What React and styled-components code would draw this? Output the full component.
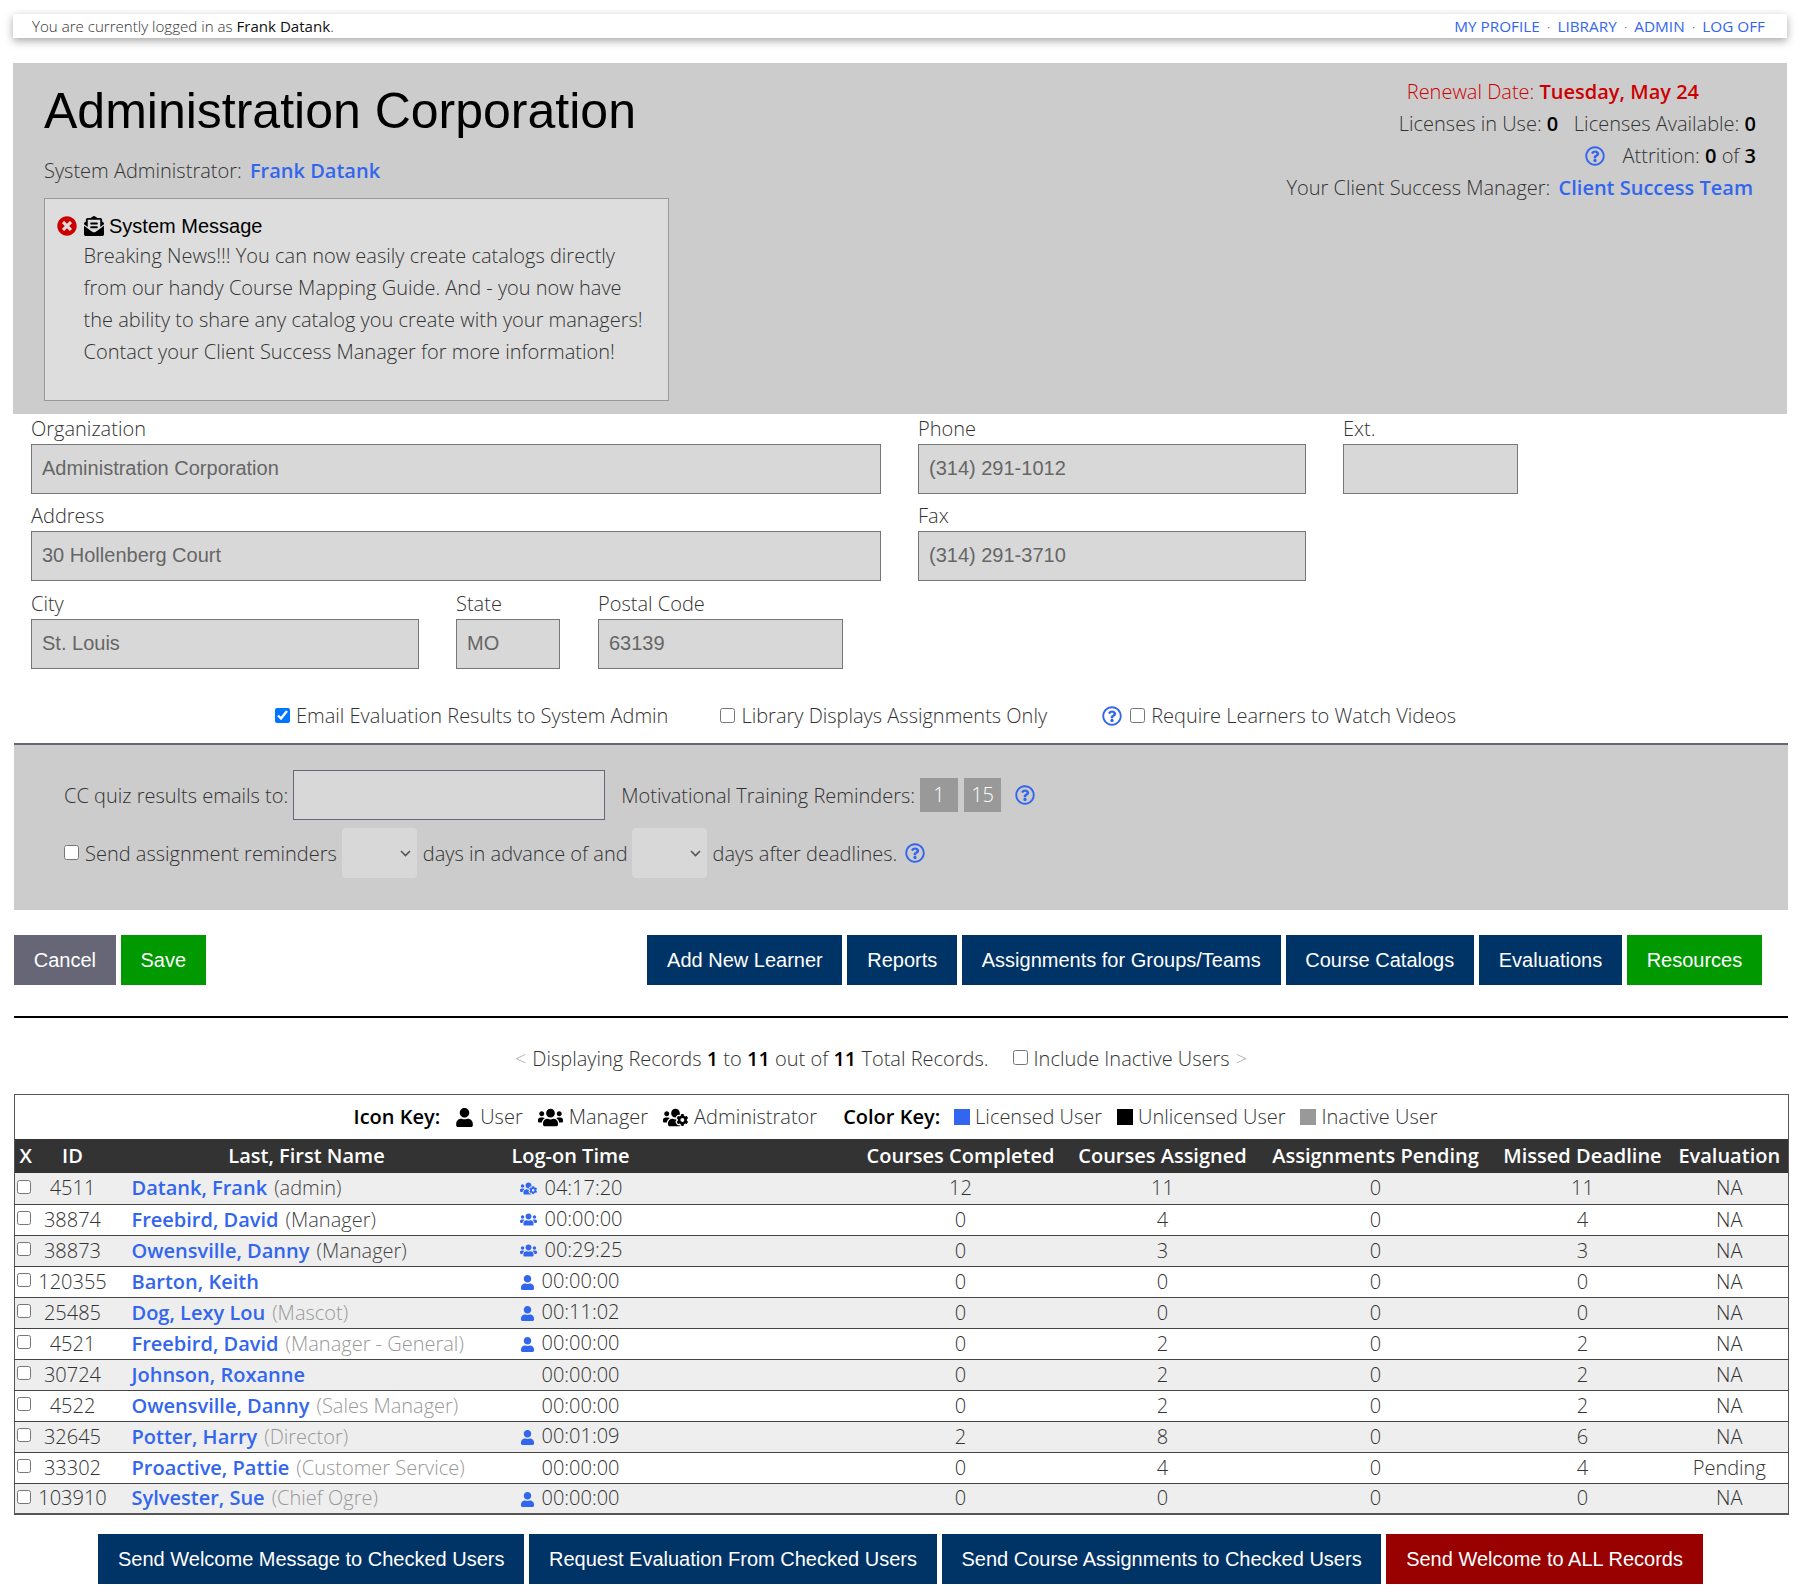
import React from "react";
import styled, { createGlobalStyle } from "styled-components";
import {
  FaEnvelopeOpenText,
  FaRegQuestionCircle,
  FaTimesCircle,
  FaUser,
  FaUsers,
  FaUsersCog,
} from "react-icons/fa";

const BLUE = "#3366ee";

const chevron =
  "data:image/svg+xml;utf8,<svg xmlns='http://www.w3.org/2000/svg' width='11' height='7' viewBox='0 0 11 7'><path d='M1 1l4.5 4.5L10 1' fill='none' stroke='%23555' stroke-width='1.6'/></svg>";

const GlobalStyle = createGlobalStyle`
  html, body {
    margin: 0;
    padding: 0;
    background: #fff;
  }
  body {
    font-family: "Open Sans", "Liberation Sans", sans-serif;
    font-weight: 300;
    font-size: 20px;
    color: #333;
  }
  * {
    box-sizing: border-box;
  }
`;

const Page = styled.div`
  width: 1805px;
  height: 1586px;
  padding: 14px 18px 0 13px;
  overflow: hidden;
`;

const TopBar = styled.div`
  height: 24px;
  margin-bottom: 25px;
  padding: 0 22px 0 19px;
  display: flex;
  justify-content: space-between;
  align-items: center;
  background: #fff;
  box-shadow: 0 3px 8px rgba(0, 0, 0, 0.35);
  font-size: 15.3px;
  line-height: 24px;
`;

const LoggedIn = styled.span`
  font-size: 15.1px;
  b {
    font-weight: 500;
    color: #111;
  }
`;

const TopLinks = styled.div`
  display: flex;
  gap: 7px;
  color: #666;
  a {
    color: ${BLUE};
    font-weight: 500;
  }
`;

const Header = styled.header`
  height: 351px;
  padding: 0 31px 0 31px;
  display: flex;
  justify-content: space-between;
  background: #ccc;
`;

const Title = styled.h1`
  margin: 18px 0 0;
  font-family: "Liberation Sans", Arial, sans-serif;
  font-weight: 400;
  font-size: 50px;
  line-height: 60px;
  color: #000;
`;

const AdminLine = styled.div`
  margin-top: 15px;
  line-height: 30px;
  a {
    margin-left: 3px;
    font-weight: 600;
    color: ${BLUE};
  }
`;

const MessageBox = styled.div`
  width: 625px;
  height: 203px;
  margin-top: 12px;
  padding: 11px 12px;
  background: #ddd;
  border: 1px solid #999;
`;

const MessageHead = styled.div`
  display: flex;
  align-items: center;
  gap: 6px;
  height: 32px;
  font-family: "Liberation Sans", Arial, sans-serif;
  font-weight: 400;
  color: #000;
`;

const ErrorIcon = styled(FaTimesCircle)`
  margin-right: 1px;
  font-size: 20px;
  color: #cc0000;
`;

const MessageIcon = styled(FaEnvelopeOpenText)`
  margin-right: -1px;
  font-size: 20px;
  color: #000;
`;

const MessageBody = styled.div`
  margin-top: -2px;
  padding-left: 26.5px;
  line-height: 32px;
  white-space: pre-line;
`;

const Stats = styled.div`
  padding-top: 13px;
  text-align: right;
  line-height: 32px;
  b {
    font-weight: 600;
    color: #000;
  }
  a {
    margin-left: 3px;
    font-weight: 600;
    color: ${BLUE};
  }
`;

const StatRow = styled.div`
  padding-right: ${(p) => p.$inset || 0}px;
  color: ${(p) => p.$color || "inherit"};
  b {
    color: ${(p) => p.$color || "#000"};
  }
`;

const Help = styled(FaRegQuestionCircle)`
  color: ${BLUE};
  font-size: 20px;
  vertical-align: -3px;
  margin: ${(p) => p.$margin || "0"};
`;

const Form = styled.div`
  padding-left: 18px;
`;

const FieldRow = styled.div`
  display: flex;
  height: ${(p) => p.$height || 87}px;
`;

const Field = styled.label`
  display: block;
  width: ${(p) => p.$width}px;
  margin-right: ${(p) => p.$gap || 0}px;
  line-height: 30px;
`;

const TextBox = styled.input`
  display: block;
  width: 100%;
  height: 50px;
  padding: 0 10px 1px;
  background: #d8d8d8;
  border: 1px solid #777;
  font-family: "Liberation Sans", Arial, sans-serif;
  font-size: 20px;
  color: #666;
`;

const OptionRow = styled.div`
  height: 67px;
  padding: 25px 0 12px 262px;
  display: flex;
  line-height: 30px;
`;

const Check = styled.input.attrs({ type: "checkbox" })`
  width: ${(p) => p.$size || 15}px;
  height: ${(p) => p.$size || 15}px;
  margin: ${(p) => p.$margin || "-2px 6px 0 0"};
  flex: none;
`;

const OptionLabel = styled.label`
  display: flex;
  align-items: center;
  margin-right: ${(p) => p.$gap || 0}px;
  margin-left: ${(p) => p.$left || 0}px;
`;

const Panel = styled.section`
  width: 1774px;
  height: 167px;
  margin-left: 1px;
  padding: 25px 0 0 50px;
  background: #ccc;
  border-top: 2px solid #667;
`;

const PanelRow = styled.div`
  display: flex;
  align-items: center;
  height: 50px;
  margin-bottom: 8px;
  gap: 5px;
`;

const CcInput = styled.input`
  width: 312px;
  height: 50px;
  margin-right: 11px;
  background: #d8d8d8;
  border: 1px solid #667;
`;

const Badge = styled.span`
  width: ${(p) => p.$width}px;
  height: 34px;
  margin-left: ${(p) => p.$left || 0}px;
  background: #999;
  color: #fff;
  text-align: center;
  line-height: 34px;
`;

const DaySelect = styled.select`
  appearance: none;
  width: 75px;
  height: 50px;
  margin: 0 1px 0 ${(p) => p.$left || 0}px;
  background: #d8d8d8 url("${chevron}") no-repeat right 6px center;
  border: none;
  border-radius: 4px;
`;

const ButtonRow = styled.div`
  display: flex;
  justify-content: space-between;
  margin: 25px 25px 31px 1px;
`;

const ButtonGroup = styled.div`
  display: flex;
  gap: 5px;
`;

const Button = styled.button`
  height: 50px;
  padding: 0 19.75px;
  border: none;
  background: ${(p) => p.$bg || "#003366"};
  color: #fff;
  font-family: "Liberation Sans", Arial, sans-serif;
  font-size: 20px;
`;

const Rule = styled.hr`
  width: 1774px;
  height: 2px;
  margin: 0 0 0 1px;
  border: none;
  background: #000;
`;

const Records = styled.div`
  height: 76px;
  display: flex;
  justify-content: center;
  align-items: center;
  padding: 5px 38px 0 0;
  b {
    font-weight: 600;
    color: #000;
  }
`;

const Faint = styled.span`
  color: #aaa;
  margin: ${(p) => p.$margin};
`;

const Table = styled.table`
  width: 1774px;
  margin-left: 1px;
  table-layout: fixed;
  border-collapse: collapse;
  border: 1px solid #555;
  border-bottom-width: 2px;
  line-height: 30px;
`;

const KeyCell = styled.th`
  padding: 0;
  font-weight: 300;
`;

const KeyRow = styled.div`
  height: 44px;
  display: flex;
  justify-content: center;
  align-items: center;
  padding-right: 12px;
  background: #fff;
`;

const KeyTitle = styled.b`
  margin: ${(p) => p.$margin || "0"};
  font-weight: 600;
  color: #000;
`;

const KeyItem = styled.span`
  display: flex;
  align-items: center;
  gap: 6px;
  margin-left: ${(p) => p.$left || 0}px;
  svg {
    color: #000;
  }
`;

const Swatch = styled.i`
  width: 16px;
  height: 16px;
  margin-right: -1px;
  background: ${(p) => p.$color};
`;

const HeadRow = styled.tr`
  background: #333;
  color: #fff;
  th {
    height: 34px;
    padding: 0;
    font-weight: 600;
    white-space: nowrap;
  }
  th:last-child {
    padding-right: 5px;
  }
`;

const NameHead = styled.th`
  && {
    padding-right: 6px;
  }
`;

const Row = styled.tr`
  background: ${(p) => (p.$odd ? "#eee" : "#fff")};
  border-bottom: 1px solid #444;
  line-height: 28px;
  &:last-child {
    border-bottom: none;
  }
  td {
    height: 31px;
    padding: 0;
    text-align: center;
    white-space: nowrap;
  }
  td:last-child {
    padding-right: 5px;
  }
`;

const CheckCell = styled.td`
  && {
    text-align: left;
    padding-left: 2px;
  }
  input {
    display: block;
    margin: -3px 0 0;
  }
`;

const NameCell = styled.td`
  && {
    text-align: left;
    padding-left: 23px;
  }
  a {
    font-weight: 600;
    color: ${BLUE};
  }
`;

const Note = styled.span`
  margin-left: 7px;
  color: ${(p) => (p.$dim ? "#999" : "#444")};
`;

const TimeCell = styled.td`
  && {
    text-align: left;
    padding-left: 9px;
  }
`;

const IconSlot = styled.span`
  display: inline-block;
  width: ${(p) => p.$width}px;
  color: ${BLUE};
  font-size: ${(p) => (p.$width > 22 ? 17 : 15)}px;
  svg {
    vertical-align: -2px;
  }
`;

const BottomButtons = styled(ButtonGroup)`
  justify-content: center;
  margin: 19px 0 0 1px;
`;

const rows = [
  { id: "4511", name: "Datank, Frank", note: "(admin)", role: "admin", time: "04:17:20", done: 12, assigned: 11, missed: 11 },
  { id: "38874", name: "Freebird, David", note: "(Manager)", role: "manager", time: "00:00:00", done: 0, assigned: 4, missed: 4 },
  { id: "38873", name: "Owensville, Danny", note: "(Manager)", role: "manager", time: "00:29:25", done: 0, assigned: 3, missed: 3 },
  { id: "120355", name: "Barton, Keith", role: "user", time: "00:00:00", done: 0, assigned: 0, missed: 0 },
  { id: "25485", name: "Dog, Lexy Lou", note: "(Mascot)", dim: true, role: "user", time: "00:11:02", done: 0, assigned: 0, missed: 0 },
  { id: "4521", name: "Freebird, David", note: "(Manager - General)", dim: true, role: "user", time: "00:00:00", done: 0, assigned: 2, missed: 2 },
  { id: "30724", name: "Johnson, Roxanne", time: "00:00:00", done: 0, assigned: 2, missed: 2 },
  { id: "4522", name: "Owensville, Danny", note: "(Sales Manager)", dim: true, time: "00:00:00", done: 0, assigned: 2, missed: 2 },
  { id: "32645", name: "Potter, Harry", note: "(Director)", dim: true, role: "user", time: "00:01:09", done: 2, assigned: 8, missed: 6 },
  { id: "33302", name: "Proactive, Pattie", note: "(Customer Service)", dim: true, time: "00:00:00", done: 0, assigned: 4, missed: 4, evaluation: "Pending" },
  { id: "103910", name: "Sylvester, Sue", note: "(Chief Ogre)", dim: true, role: "user", time: "00:00:00", done: 0, assigned: 0, missed: 0 },
];

const colWidths = [22, 72, 402, 120, 227, 206, 198, 228, 186, 113];

const RoleIcon = ({ role }) => {
  if (role === "admin") return <IconSlot $width={25}><FaUsersCog /></IconSlot>;
  if (role === "manager") return <IconSlot $width={25}><FaUsers /></IconSlot>;
  if (role === "user") return <IconSlot $width={22}><FaUser /></IconSlot>;
  return <IconSlot $width={22} />;
};

export default function App() {
  return (
    <Page>
      <GlobalStyle />
      <TopBar>
        <LoggedIn>You are currently logged in as <b>Frank Datank</b>.</LoggedIn>
        <TopLinks>
          <a>MY PROFILE</a>·<a>LIBRARY</a>·<a>ADMIN</a>·<a>LOG OFF</a>
        </TopLinks>
      </TopBar>

      <Header>
        <div>
          <Title>Administration Corporation</Title>
          <AdminLine>System Administrator: <a>Frank Datank</a></AdminLine>
          <MessageBox>
            <MessageHead>
              <ErrorIcon />
              <MessageIcon />
              System Message
            </MessageHead>
            <MessageBody>
              {"Breaking News!!! You can now easily create catalogs directly\nfrom our handy Course Mapping Guide. And - you now have\nthe ability to share any catalog you create with your managers!\nContact your Client Success Manager for more information!"}
            </MessageBody>
          </MessageBox>
        </div>
        <Stats>
          <StatRow $inset={57} $color="#cc0000">Renewal Date: <b>Tuesday, May 24</b></StatRow>
          <StatRow>Licenses in Use: <b>0</b> &nbsp; Licenses Available: <b>0</b></StatRow>
          <StatRow><Help $margin="0 18px 0 0" />Attrition: <b>0</b> of <b>3</b></StatRow>
          <StatRow $inset={3}>Your Client Success Manager: <a>Client Success Team</a></StatRow>
        </Stats>
      </Header>

      <Form>
        <FieldRow>
          <Field $width={850} $gap={37}>Organization<TextBox readOnly value="Administration Corporation" /></Field>
          <Field $width={388} $gap={37}>Phone<TextBox readOnly value="(314) 291-1012" /></Field>
          <Field $width={175}>Ext.<TextBox readOnly value="" /></Field>
        </FieldRow>
        <FieldRow $height={88}>
          <Field $width={850} $gap={37}>Address<TextBox readOnly value="30 Hollenberg Court" /></Field>
          <Field $width={388}>Fax<TextBox readOnly value="(314) 291-3710" /></Field>
        </FieldRow>
        <FieldRow>
          <Field $width={388} $gap={37}>City<TextBox readOnly value="St. Louis" /></Field>
          <Field $width={104} $gap={38}>State<TextBox readOnly value="MO" /></Field>
          <Field $width={245}>Postal Code<TextBox readOnly value="63139" /></Field>
        </FieldRow>
      </Form>

      <OptionRow>
        <OptionLabel $gap={52}><Check defaultChecked />Email Evaluation Results to System Admin</OptionLabel>
        <OptionLabel $gap={55}><Check />Library Displays Assignments Only</OptionLabel>
        <Help $margin="5px 8px 0 0" />
        <OptionLabel><Check />Require Learners to Watch Videos</OptionLabel>
      </OptionRow>

      <Panel>
        <PanelRow>
          CC quiz results emails to:
          <CcInput />
          Motivational Training Reminders:
          <Badge $width={38}>1</Badge>
          <Badge $width={37} $left={1}>15</Badge>
          <Help $margin="0 0 0 9px" />
        </PanelRow>
        <PanelRow>
          <Check $margin="-2px 1px 0 0" />
          Send assignment reminders
          <DaySelect><option /></DaySelect>
          days in advance of and
          <DaySelect $left={-1}><option /></DaySelect>
          days after deadlines.
          <Help $margin="0 0 0 3px" />
        </PanelRow>
      </Panel>

      <ButtonRow>
        <ButtonGroup>
          <Button $bg="#666677">Cancel</Button>
          <Button $bg="#009900">Save</Button>
        </ButtonGroup>
        <ButtonGroup>
          <Button>Add New Learner</Button>
          <Button>Reports</Button>
          <Button>Assignments for Groups/Teams</Button>
          <Button>Course Catalogs</Button>
          <Button>Evaluations</Button>
          <Button $bg="#009900">Resources</Button>
        </ButtonGroup>
      </ButtonRow>

      <Rule />

      <Records>
        <Faint $margin="0 6px 0 0">&lt;</Faint>
        Displaying Records&nbsp;<b>1</b>&nbsp;to&nbsp;<b>11</b>&nbsp;out of&nbsp;<b>11</b>&nbsp;Total Records.
        <OptionLabel $left={24}><Check />Include Inactive Users</OptionLabel>
        <Faint $margin="0 0 0 6px">&gt;</Faint>
      </Records>

      <Table>
        <colgroup>
          {colWidths.map((w, i) => <col key={i} width={w} />)}
        </colgroup>
        <thead>
          <tr>
            <KeyCell colSpan={10}>
              <KeyRow>
                <KeyTitle>Icon Key:</KeyTitle>
                <KeyItem $left={15}><FaUser size={19} />User</KeyItem>
                <KeyItem $left={15}><FaUsers size={25} />Manager</KeyItem>
                <KeyItem $left={15}><FaUsersCog size={25} />Administrator</KeyItem>
                <KeyTitle $margin="0 14px 0 26px">Color Key:</KeyTitle>
                <KeyItem><Swatch $color={BLUE} />Licensed User</KeyItem>
                <KeyItem $left={15}><Swatch $color="#000" />Unlicensed User</KeyItem>
                <KeyItem $left={15}><Swatch $color="#999" />Inactive User</KeyItem>
              </KeyRow>
            </KeyCell>
          </tr>
          <HeadRow>
            <th>X</th>
            <th>ID</th>
            <NameHead>Last, First Name</NameHead>
            <th>Log-on Time</th>
            <th />
            <th>Courses Completed</th>
            <th>Courses Assigned</th>
            <th>Assignments Pending</th>
            <th>Missed Deadline</th>
            <th>Evaluation</th>
          </HeadRow>
        </thead>
        <tbody>
          {rows.map((row, i) => (
            <Row key={row.id} $odd={i % 2 === 0}>
              <CheckCell><Check $size={14} /></CheckCell>
              <td>{row.id}</td>
              <NameCell>
                <a>{row.name}</a>
                {row.note && <Note $dim={row.dim}>{row.note}</Note>}
              </NameCell>
              <TimeCell><RoleIcon role={row.role} />{row.time}</TimeCell>
              <td />
              <td>{row.done}</td>
              <td>{row.assigned}</td>
              <td>0</td>
              <td>{row.missed}</td>
              <td>{row.evaluation || "NA"}</td>
            </Row>
          ))}
        </tbody>
      </Table>

      <BottomButtons>
        <Button>Send Welcome Message to Checked Users</Button>
        <Button>Request Evaluation From Checked Users</Button>
        <Button>Send Course Assignments to Checked Users</Button>
        <Button $bg="#990000">Send Welcome to ALL Records</Button>
      </BottomButtons>
    </Page>
  );
}
